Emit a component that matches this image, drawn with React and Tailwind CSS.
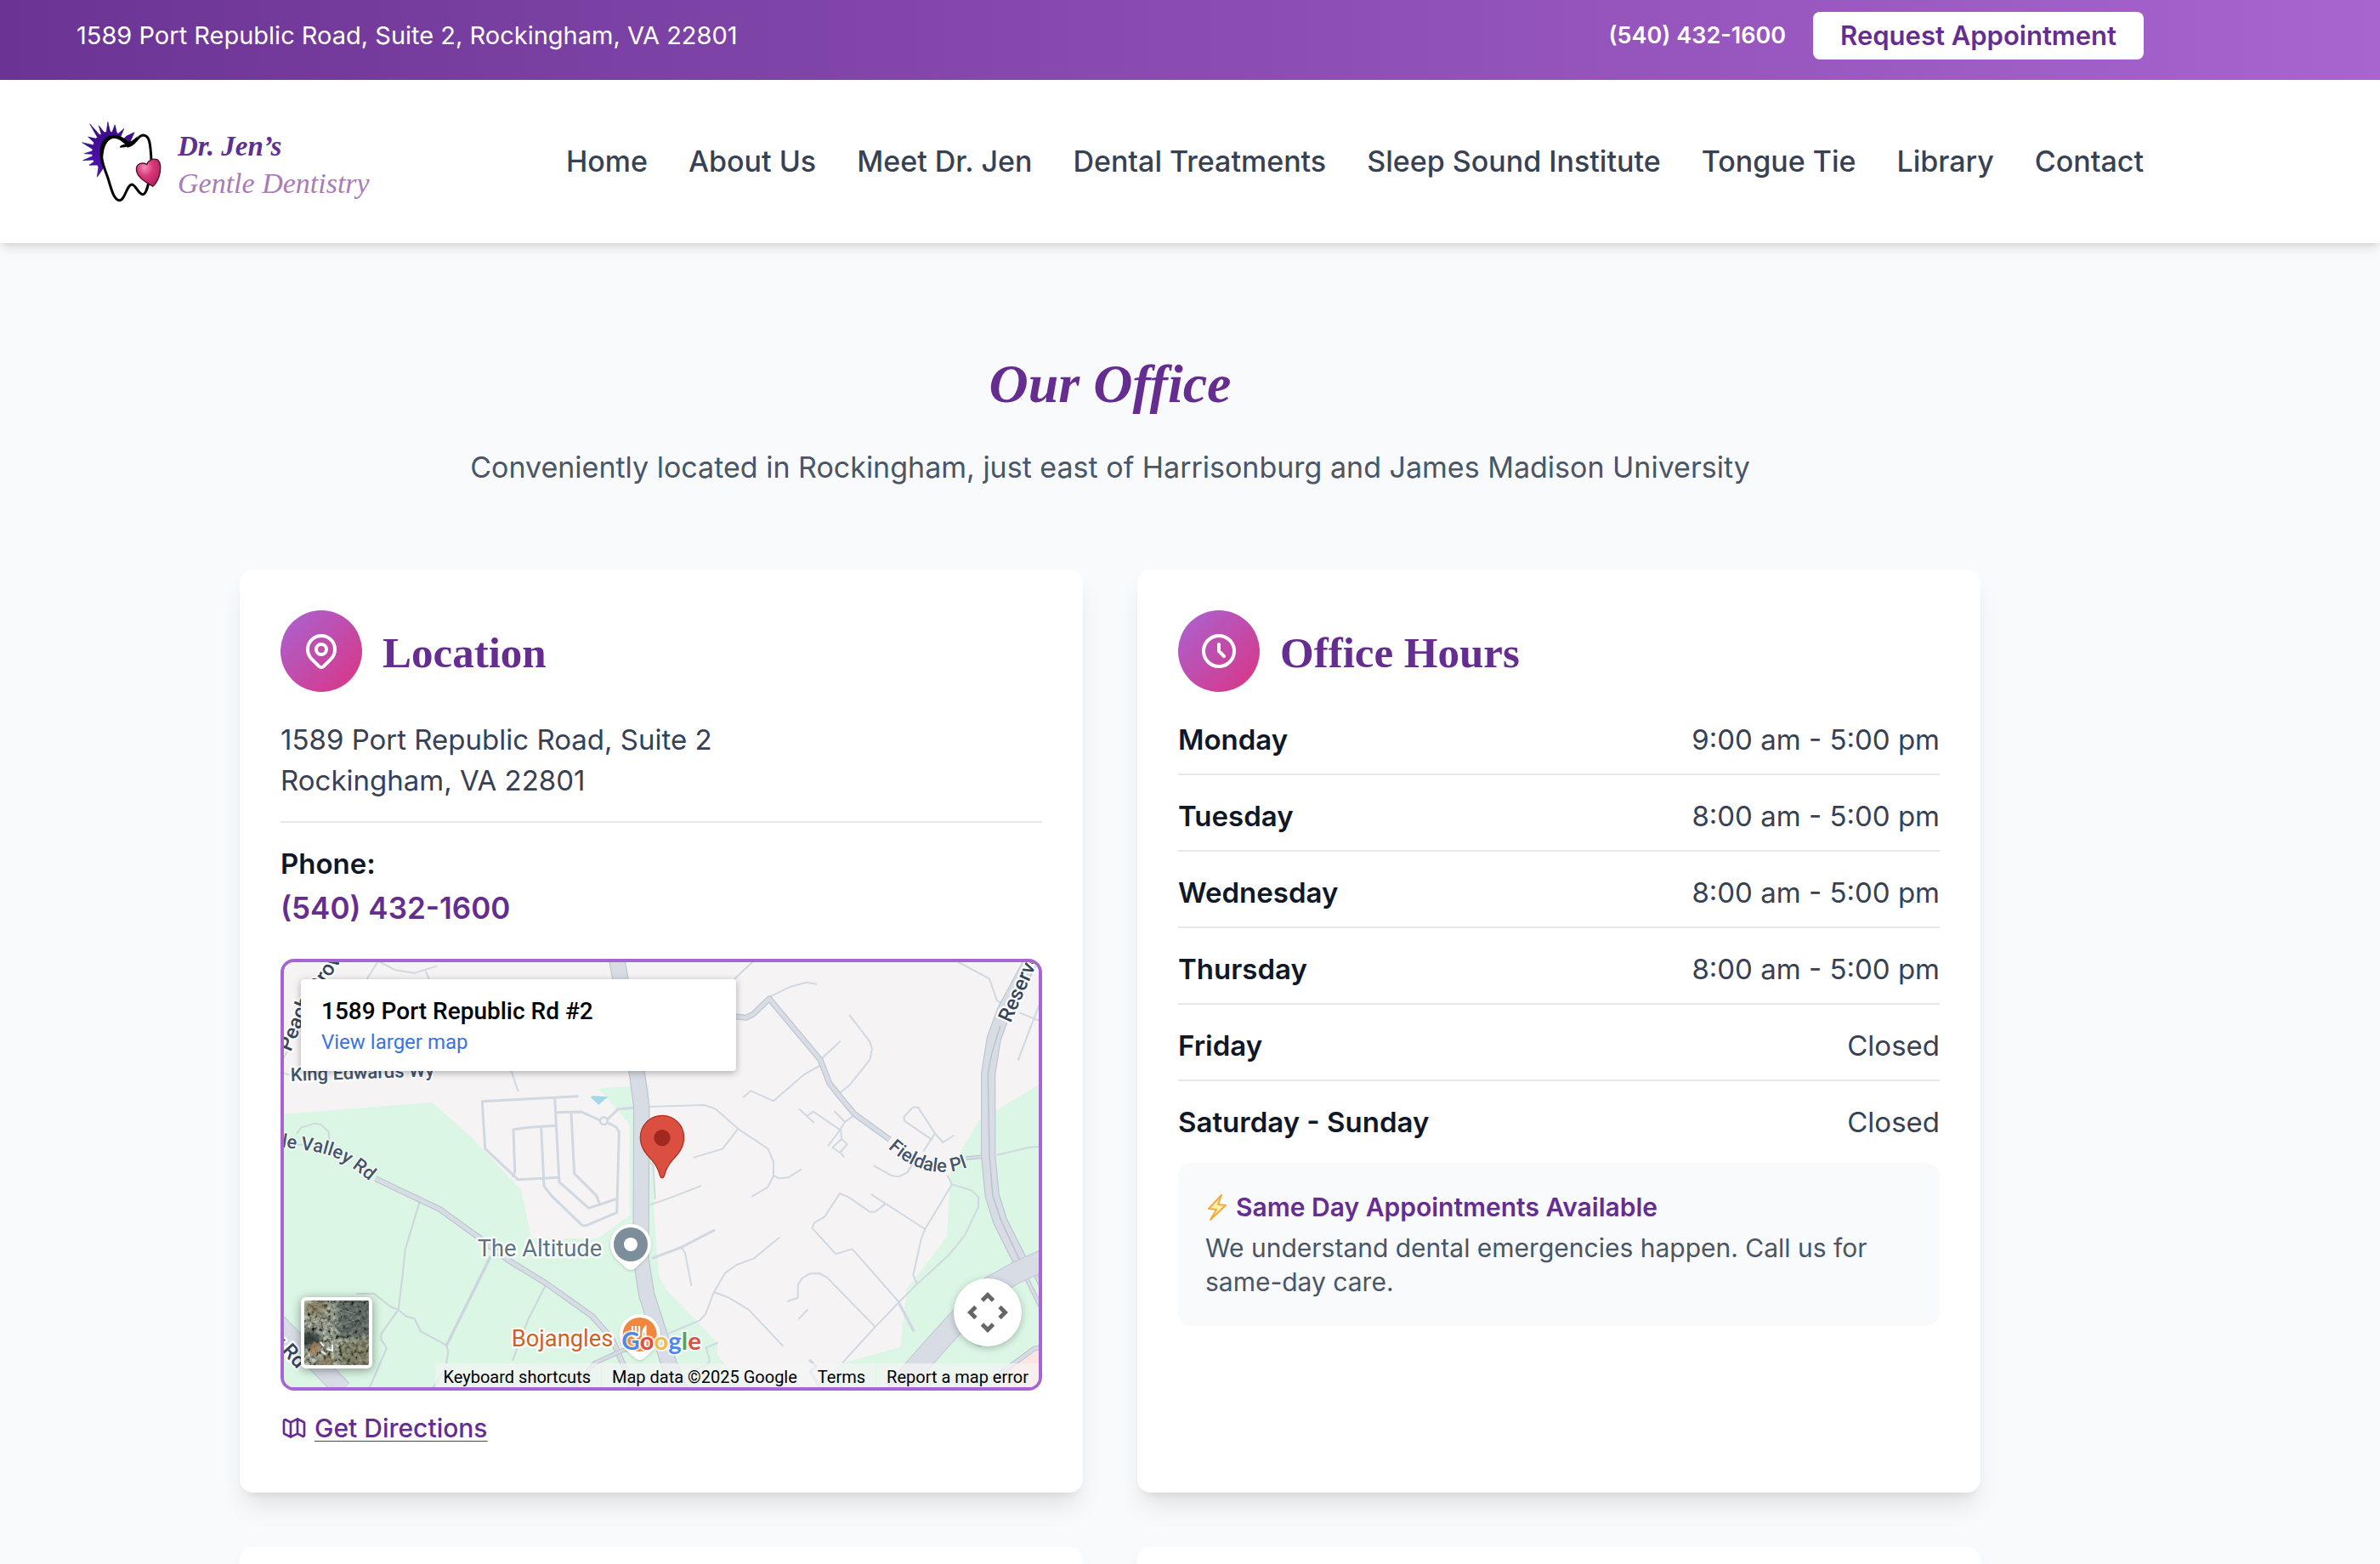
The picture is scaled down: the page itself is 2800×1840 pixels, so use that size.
import React from "react";

const NAV = [
  "Home",
  "About Us",
  "Meet Dr. Jen",
  "Dental Treatments",
  "Sleep Sound Institute",
  "Tongue Tie",
  "Library",
  "Contact",
];

const HOURS = [
  ["Monday", "9:00 am - 5:00 pm"],
  ["Tuesday", "8:00 am - 5:00 pm"],
  ["Wednesday", "8:00 am - 5:00 pm"],
  ["Thursday", "8:00 am - 5:00 pm"],
  ["Friday", "Closed"],
  ["Saturday - Sunday", "Closed"],
];

const CARD =
  "rounded-2xl bg-white p-12 shadow-[0_20px_30px_-6px_rgba(0,0,0,0.1),0_8px_12px_-8px_rgba(0,0,0,0.1)]";

function ToothLogo() {
  return (
    <svg viewBox="30 30 310 300" className="h-[100px] w-[103px] shrink-0" aria-hidden="true">
      <defs>
        <linearGradient id="burst" x1="0" y1="0" x2="0" y2="1">
          <stop offset="0" stopColor="#3a0a86" />
          <stop offset="1" stopColor="#5410b8" />
        </linearGradient>
        <radialGradient id="heart" cx="0.35" cy="0.3" r="0.75">
          <stop offset="0" stopColor="#f28fb5" />
          <stop offset="0.45" stopColor="#d9397a" />
          <stop offset="1" stopColor="#b3205c" />
        </radialGradient>
      </defs>
      <path
        d="M235 77 L207 90 L197 100 L185 95 L198 64 L177 82 L172 76 L166 50 L156 77 L149 74 L141 40 L136 76 L128 77 L109 53 L118 84 L112 86 L77 47 L104 94 L98 99 L71 93 L92 112 L90 122 L50 113 L87 136 L86 143 L58 152 L86 154 L87 161 L53 176 L90 174 L92 181 L75 193 L104 192 L108 200 L103 235 L122 208 L150 150 L220 110 Z"
        fill="url(#burst)"
        stroke="#2a1070"
        strokeWidth="2"
      />
      <path
        d="M212 113 C200 104 185 93 163 91 C138 90 122 108 118 138 C113 172 130 205 140 235 C152 270 160 316 182 318 C202 317 208 262 226 261 C240 262 248 296 265 297 C280 294 286 252 292 222 C298 195 295 165 292 135 C289 105 284 88 266 87 C246 88 240 120 212 126 Z"
        fill="#fff"
        stroke="#000"
        strokeWidth="9"
        strokeLinejoin="round"
      />
      <path
        d="M116 175 C110 140 120 92 162 86 C186 86 202 100 214 109 C224 112 236 100 246 90 C240 108 230 130 184 131 C182 125 190 121 202 119 C190 108 180 99 162 98 C134 102 124 138 124 176 Z"
        fill="#000"
      />
      <path
        d="M300 268 C278 254 240 236 242 204 C245 186 264 182 279 190 C284 177 299 167 315 173 C331 182 329 212 322 234 C316 250 308 262 300 268 Z"
        fill="url(#heart)"
        stroke="#4a1030"
        strokeWidth="4"
      />
    </svg>
  );
}

function OutlineIcon({ className, children }) {
  return (
    <svg
      viewBox="0 0 24 24"
      className={className}
      fill="none"
      stroke="currentColor"
      strokeWidth="2"
      strokeLinecap="round"
      strokeLinejoin="round"
      aria-hidden="true"
    >
      {children}
    </svg>
  );
}

function CardHeading({ title, children }) {
  return (
    <div className="mb-8 flex items-center gap-6">
      <span className="flex size-24 items-center justify-center rounded-full bg-[linear-gradient(135deg,#a864d3,#db3483)] text-white">
        <OutlineIcon className="size-12">{children}</OutlineIcon>
      </span>
      <h2 className="pt-1 font-['Liberation_Serif',serif] text-[51px] font-bold leading-[60px] text-[#662d91]">
        {title}
      </h2>
    </div>
  );
}

function MapLines({ d, w = 6, color = "#d0d8e1" }) {
  return <path d={d} fill="none" stroke={color} strokeWidth={w} strokeLinejoin="round" strokeLinecap="round" />;
}

function Road({ d, w, edge = "#bcc5cf", fill = "#d8dde5" }) {
  return (
    <g fill="none" strokeLinejoin="round">
      <path d={d} stroke={edge} strokeWidth={w + 4} />
      <path d={d} stroke={fill} strokeWidth={w - 3} />
    </g>
  );
}

function MapDrawing() {
  return (
    <svg
      viewBox="0 0 2664 1500"
      preserveAspectRatio="xMidYMid slice"
      className="absolute inset-0 size-full font-['Roboto',sans-serif]"
      aria-label="Map around 1589 Port Republic Rd"
      role="img"
    >
      <rect width="2664" height="1500" fill="#f5f3f4" />
      <g transform="translate(-42 -36)">
        <path
          d="M42 572 L565 530 L700 650 L880 840 L915 1010 L1150 1012 L1262 930 L1262 610 L1205 540 L1150 482 L1330 468 L1342 700 L1350 950 L1365 1140 L1390 1190 L1572 1380 L1572 1420 L1610 1470 L1720 1540 L42 1540 Z"
          fill="#dbf6e4"
        />
        <path
          d="M2706 468 L2555 560 L2490 600 L2395 770 L2382 1005 L2240 1190 L2218 1395 L2015 1450 L1900 1540 L2706 1540 Z"
          fill="#dbf6e4"
        />
        <path d="M2706 1400 L2600 1470 L2560 1540 L2706 1540 Z" fill="#fae5e2" />
        <path d="M1124 512 L1132 508 L1186 511 L1153 539 Z" fill="#9fd8ea" />
        <path d="M2470 1380 L2500 1395 L2520 1380 Z" fill="#9fd8ea" />

        <MapLines d="M335 95 L372 36 M382 36 L436 64 L504 74 L581 50 M542 68 L556 98 M42 372 L60 340 M845 422 L868 490 M42 428 L70 436" />
        <MapLines d="M88 640 L103 620 L150 605 L172 608 L200 635 L202 660 M82 680 L120 680" color="#cfdad9" />
        <MapLines
          w={9}
          d="M1078 509 L742 527 L752 694 L868 803 L1012 796 M998 515 L1014 812 L1118 904 L1220 870 M1002 566 L1092 564 L1158 594 M1183 592 L1222 554 L1280 550 M1184 602 L1215 618 L1225 636 L1217 920 L1110 965 L1095 965 L988 862 L960 826 L950 620 M1000 613 L910 619 L852 626 L857 778 L850 790 M1056 568 L1067 782 L1145 860 L1156 888"
        />
        <circle cx="1171" cy="596" r="13" fill="#f5f3f4" stroke="#d0d8e1" strokeWidth="8" />
        <MapLines
          color="#ccd5dc"
          d="M522 878 L470 1050 L460 1150 L446 1262 L385 1348 L385 1368 L405 1398 L345 1536 M300 1206 L360 1206 L418 1252 L446 1262 L474 1286 L502 1294 L526 1340 L616 1388 L622 1412 L612 1470 L570 1536 M968 1172 L905 1295 L850 1440 M1210 1412 L1080 1500"
        />
        <MapLines color="#ccd5dc" w={10} d="M770 1078 L616 1388" />
        <Road d="M365 800 L592 908 L720 1000 L830 1085 L968 1170 L1130 1285 L1200 1365 L1250 1480 L1270 1540" w={17} />
        <Road d="M1060 1540 L1140 1450 L1240 1405 L1330 1392" w={12} />
        <Road d="M20 1310 L250 1545" w={64} edge="#c3cad4" />

        <Road d="M1218 30 L1290 440 L1304 545 L1302 1080 L1322 1210 L1400 1450 L1440 1545" w={54} />
        <MapLines
          d="M1335 546 L1526 540 L1566 554 L1645 624 L1750 694 L1770 740 L1770 790 L1750 830 L1695 862 M1645 624 L1590 695 L1490 725 M1770 790 L1790 799 L1822 796 L1867 768 M1335 892 L1420 862 L1512 826 M1335 745 L1345 750 L1352 870 M1632 95 L1695 36"
        />
        <MapLines w={9} d="M1345 1080 L1445 1042 L1560 982" />
        <MapLines d="M1445 1042 L1458 1062 L1480 1176 M1560 1200 L1600 1132 L1640 1104 L1700 1082 L1790 1008 M1390 1350 L1510 1300 L1530 1278 L1560 1200 L1612 1220 L1682 1262 L1803 1390 M1820 1233 L1856 1220 L1856 1176 L1870 1152 L1898 1135 L1932 1134 L1958 1148 L2128 1322 M1860 1294 L1890 1263 M1572 1380 L1532 1396 L1545 1440 L1540 1452 L1460 1490" />
        <MapLines d="M2015 1448 L2128 1324 L2213 1236 L2270 1178 L2388 1070 L2445 1000 L2493 900 L2493 865 L2470 842 L2400 820 L2385 790 M2400 820 L2305 978 L2292 1010 L2263 1140 L2276 1172 M2213 1236 L2048 1048 L1990 1066 L1906 974 L1915 955 L1950 935 L2004 852 L2040 868 L2110 917 L2128 917 L2164 890 M2116 856 L2305 978" />
        <MapLines w={10} d="M2213 1240 L2264 1336 M1900 1442 L1920 1464 L1900 1480 L1930 1530" />
        <MapLines d="M1754 160 L1830 122 L1888 107 L1921 113 M2039 224 L2110 316 L2118 342 L2110 380 L2040 468 L2004 498 M1938 378 L2005 316 M1935 400 L1876 434 L1770 526 L1690 490 L1664 512 M2056 575 L2020 602 L2005 628 L1964 682 M1986 563 L2022 600 M2005 628 L1910 563 L1890 578 M1862 555 L1911 601 M2008 630 L2010 660 L2030 678 L2005 708 L1978 690 L2010 660 M2005 708 L2018 722" />
        <MapLines d="M2328 662 L2232 596 L2230 582 L2262 548 L2280 548 L2340 640 L2300 702 M2340 640 L2368 672 L2405 648 M2125 755 L2188 790 L2212 793 L2242 778 L2270 735" />
        <MapLines d="M2423 36 L2532 94 L2558 170 L2580 186 M2634 380 L2706 190 M2640 215 L2706 242 M2460 728 L2510 722 M2560 716 L2670 690 L2706 687" />
        <Road d="M1638 228 L1672 232 L1698 220 L1755 165 L1935 380 L1968 464 L2004 510 L2056 572 L2180 662" w={17} />
        <Road d="M2450 728 L2530 720" w={10} />
        <Road d="M2690 1130 L2770 1290" w={12} />
        <Road d="M2662 1150 L2742 1310" w={12} />
        <Road d="M2680 30 L2585 205 L2548 305 L2528 430 L2528 720 L2542 860 L2570 950 L2650 1110" w={48} />
        <MapLines w={5} color="#bcc5cf" d="M2570 262 L2540 360 L2527 430 L2532 720 L2544 860 L2574 950 L2640 1090" />
        <Road d="M2730 1085 L2630 1130 L2540 1180 L2450 1270 L2340 1390 L2200 1550" w={74} edge="#c3cad4" />
        <path d="M2626 1096 L2660 1076 L2680 1120 L2640 1130 Z" fill="#d8dde5" />
        <Road d="M2540 1510 L2690 1400 L2730 1392" w={14} />

        <defs>
          <path id="valley" d="M-4 682 L85 696 Q200 706 255 742 Q305 775 352 816 L400 860" />
          <path id="fieldale" d="M2174 692 Q2330 834 2500 738" />
        </defs>
        <g fontSize="66" fontWeight="500" fill="#44546a" stroke="#fff" strokeWidth="14" paintOrder="stroke" strokeLinejoin="round">
          <text transform="translate(66 456) rotate(-2)">King Edwards Wy</text>
          <text strokeWidth="7">
            <textPath href="#valley">ple Valley Rd</textPath>
          </text>
          <text strokeWidth="7">
            <textPath href="#fieldale">Fieldale Pl</textPath>
          </text>
          <g fill="#36455a" fontSize="72">
            <text transform="translate(66 354) rotate(-68)">Peach</text>
            <text transform="translate(162 152) rotate(-56)">Grove</text>
            <text transform="translate(2606 252) rotate(-66)">Reservoir St</text>
            <text transform="translate(-4 1370) rotate(48)">y Rd</text>
          </g>
        </g>
        <g fontSize="82" stroke="#fff" strokeWidth="14" paintOrder="stroke" strokeLinejoin="round">
          <text x="725" y="1073" fill="#5d7482">The Altitude</text>
          <text x="845" y="1391" fill="#cb6324">Bojangles</text>
        </g>

        <g className="drop-shadow-lg">
          <path d="M1266 960 A72 72 0 0 1 1318 1082 L1282 1116 Q1266 1128 1250 1116 L1214 1082 A72 72 0 0 1 1266 960 Z" fill="#fff" />
          <path d="M1298 1278 A72 72 0 0 1 1350 1400 L1314 1434 Q1298 1446 1282 1434 L1246 1400 A72 72 0 0 1 1298 1278 Z" fill="#fff" />
        </g>
        <circle cx="1266" cy="1032" r="60" fill="#7b8e9a" />
        <circle cx="1266" cy="1032" r="24" fill="#fff" />
        <circle cx="1298" cy="1350" r="60" fill="#f0873c" />
        <path
          d="M1272 1320 V1345 Q1272 1360 1284 1360 V1392 M1284 1320 V1360 M1296 1320 V1345 Q1296 1360 1284 1360 M1318 1392 V1324 Q1308 1334 1308 1358 H1318"
          fill="none"
          stroke="#fff"
          strokeWidth="7"
        />

        <path
          d="M1377 577 C1420 577 1454 612 1454 655 C1454 690 1434 712 1414 734 C1396 754 1390 768 1385 788 Q1382 797 1377 797 Q1372 797 1369 788 C1364 768 1358 754 1340 734 C1320 712 1300 690 1300 655 C1300 612 1334 577 1377 577 Z"
          fill="#db4f40"
          stroke="#b03226"
          strokeWidth="4"
        />
        <circle cx="1377" cy="656" r="29" fill="#a0281f" />

        <text
          x="1234"
          y="1403"
          fontSize="88"
          fontWeight="700"
          className="font-['Lato',sans-serif]"
          stroke="#fff"
          strokeOpacity="0.75"
          strokeWidth="12"
          paintOrder="stroke"
        >
          <tspan fill="#4f86ec">G</tspan>
          <tspan fill="#dc5044">o</tspan>
          <tspan fill="#f2bd3a">o</tspan>
          <tspan fill="#4f86ec">g</tspan>
          <tspan fill="#57a55c">l</tspan>
          <tspan fill="#dc5044">e</tspan>
        </text>
      </g>
    </svg>
  );
}

function SatelliteThumb() {
  return (
    <svg viewBox="0 0 76 76" className="size-full" aria-hidden="true">
      <defs>
        <filter id="ground" x="0" y="0" width="100%" height="100%">
          <feTurbulence type="fractalNoise" baseFrequency="0.22" numOctaves="4" seed="8" />
          <feColorMatrix values="0.8 0.5 0 0 -0.38  0.8 0.5 0 0 -0.36  0.7 0.5 0 0 -0.37  0 0 0 0 1" />
        </filter>
        <filter id="soften" x="-20%" y="-20%" width="140%" height="140%">
          <feGaussianBlur stdDeviation="3" />
        </filter>
      </defs>
      <rect width="76" height="76" filter="url(#ground)" />
      <g filter="url(#soften)">
        <path d="M4 2 H26 V12 L12 20 L4 16 Z" fill="#7a6342" opacity="0.5" />
        <path d="M38 -4 H80 V42 L40 44 Z" fill="#2b383c" opacity="0.5" />
        <path d="M-4 36 L18 38 L16 54 L-4 54 Z" fill="#1a2426" opacity="0.8" />
        <path d="M42 52 L76 44 V80 H42 Z" fill="#5c5836" opacity="0.45" />
        <path d="M14 80 Q18 62 34 64 V80 Z" fill="#7c6a48" opacity="0.6" />
      </g>
      <path d="M11 48 L19 52 L14 65 L5 61 Z" fill="#a87b56" opacity="0.75" />
      <path d="M30 0 L34 26 L35 60 L42 76" fill="none" stroke="#8d948f" strokeWidth="2" opacity="0.8" />
      <g fill="none" stroke="#8b9593" strokeWidth="1" opacity="0.7">
        <path d="M10 28 L32 28 M12 28 V40 M16 28 V40 M20 28 V41 M24 28 V41 M28 28 V42 M12 14 Q24 10 30 22 M36 8 L60 16 M38 30 L62 22" />
      </g>
      <path d="M19 49 L23 54 M20 60 L25 63 M33 52 V59 L27 57" fill="none" stroke="#f2f2ee" strokeWidth="2" />
    </svg>
  );
}

function OfficeMap() {
  return (
    <div className="relative mt-8 h-[508px] overflow-hidden rounded-2xl border-4 border-[#a864d3]">
      <MapDrawing />
      <div className="absolute left-5 top-5 w-[512px] rounded-sm bg-white px-6 pb-4 pt-5 font-['Roboto',sans-serif] leading-9 shadow-[0_2px_8px_rgba(0,0,0,0.3)]">
        <p className="text-[28px] font-medium text-black">1589 Port Republic Rd #2</p>
        <a href="#map" className="block text-2xl leading-9 text-[#3b73e0]">
          View larger map
        </a>
      </div>
      <button
        type="button"
        aria-label="Show satellite imagery"
        className="absolute bottom-[22px] left-5 size-[84px] overflow-hidden rounded-md border-4 border-white bg-white shadow-[0_2px_12px_rgba(0,0,0,0.4)]"
      >
        <SatelliteThumb />
      </button>
      <button
        type="button"
        aria-label="Map camera controls"
        className="absolute bottom-12 right-5 flex size-20 items-center justify-center rounded-full bg-white shadow-[0_2px_8px_rgba(0,0,0,0.25)]"
      >
        <svg viewBox="0 0 140 140" className="size-12" fill="none" stroke="#666" strokeWidth="14" aria-hidden="true">
          <path d="M51 29 L70 10 L89 29 M51 111 L70 130 L89 111 M29 51 L10 70 L29 89 M111 51 L130 70 L111 89" />
        </svg>
      </button>
      <div className="absolute bottom-0 right-0 flex h-7 items-center font-['Roboto',sans-serif] text-xl leading-8 text-black">
        <button type="button" className="h-7 bg-[#f5f5f5]/70 pl-2.5 pr-3">
          Keyboard shortcuts
        </button>
        <span className="ml-px h-7 bg-[#f5f5f5]/70 px-3">Map data ©2025 Google</span>
        <a href="#terms" className="h-7 bg-[#f5f5f5]/70 px-3">
          Terms
        </a>
        <a href="#report" className="ml-px h-7 bg-[#f5f5f5]/70 px-3">
          Report a map error
        </a>
      </div>
    </div>
  );
}

function LocationCard() {
  return (
    <section className={CARD}>
      <CardHeading title="Location">
        <path d="M17.657 16.657L13.414 20.9a1.998 1.998 0 01-2.827 0l-4.244-4.243a8 8 0 1111.314 0z" />
        <path d="M15 11a3 3 0 11-6 0 3 3 0 016 0z" />
      </CardHeading>
      <address className="mb-6 border-b-2 border-gray-200 pb-6 text-[33px] leading-[48px] not-italic text-gray-700">
        1589 Port Republic Road, Suite 2<br />
        Rockingham, VA 22801
      </address>
      <p className="text-[33px] font-semibold leading-[48px] text-gray-900">Phone:</p>
      <a href="tel:5404321600" className="block text-[35px] font-semibold leading-[56px] text-[#662d91]">
        (540) 432-1600
      </a>
      <OfficeMap />
      <a
        href="#directions"
        className="mb-2 mt-6 flex h-10 w-fit items-center gap-2 text-[30px] font-medium leading-10 text-[#662d91]"
      >
        <OutlineIcon className="size-8">
          <path d="M9 20l-5.447-2.724A1 1 0 013 16.382V5.618a1 1 0 011.447-.894L9 7m0 13l6-3m-6 3V7m6 10l4.553 2.276A1 1 0 0021 18.382V7.618a1 1 0 00-.553-.894L15 4m0 13V4m0 0L9 7" />
        </OutlineIcon>
        <span className="underline decoration-1 underline-offset-4">Get Directions</span>
      </a>
    </section>
  );
}

function HoursCard() {
  return (
    <section className={CARD}>
      <CardHeading title="Office Hours">
        <path d="M12 8v4l3 3m6-3a9 9 0 11-18 0 9 9 0 0118 0z" />
      </CardHeading>
      <table className="w-full border-collapse text-[33px] leading-[48px]">
        <tbody>
          {HOURS.map(([day, time]) => (
            <tr key={day} className="group border-b-2 border-gray-200 last:border-b-0">
              <th
                scope="row"
                className="pb-4 pt-6 text-left font-semibold text-gray-900 group-first:pt-0 group-last:pb-0"
              >
                {day}
              </th>
              <td className="pb-4 pt-6 text-right text-gray-700 group-first:pt-0 group-last:pb-0">{time}</td>
            </tr>
          ))}
        </tbody>
      </table>
      <div className="mt-6 rounded-2xl bg-[#f8fafc] p-8 text-[30px] leading-10">
        <p className="mb-2 flex items-center gap-2 font-semibold text-[#662d91]">
          <svg viewBox="0 0 28 36" className="h-9 w-7" aria-hidden="true">
            <path
              d="M19 4 L4 20 L13 21 L6 33 L24 16 L15 15 Z"
              fill="#fdf0b0"
              stroke="#f0ac3c"
              strokeWidth="2"
              strokeLinejoin="round"
            />
          </svg>
          Same Day Appointments Available
        </p>
        <p className="text-gray-600">We understand dental emergencies happen. Call us for same-day care.</p>
      </div>
    </section>
  );
}

export default function App() {
  return (
    <div className="h-screen overflow-hidden bg-[#f8fafc] font-['Inter',sans-serif]">
      <div className="bg-[linear-gradient(90deg,#6b3494,#a864cf)]">
        <div className="flex max-w-[2612px] items-center justify-between px-[90px] pb-6 pt-3.5 text-white">
          <p className="text-[29px] leading-10">1589 Port Republic Road, Suite 2, Rockingham, VA 22801</p>
          <div className="flex items-center gap-8">
            <a href="tel:5404321600" className="text-[27px] font-semibold leading-10">
              (540) 432-1600
            </a>
            <button
              type="button"
              className="h-14 rounded-lg bg-white px-8 text-[31px] font-semibold leading-10 text-[#662d91]"
            >
              Request Appointment
            </button>
          </div>
        </div>
      </div>

      <header className="relative bg-white shadow-[0_8px_12px_-2px_rgba(0,0,0,0.1),0_4px_8px_-4px_rgba(0,0,0,0.1)]">
        <div className="flex h-48 max-w-[2612px] items-center justify-between px-[90px]">
          <a href="#home" className="flex items-center gap-4 font-['Liberation_Serif',serif] text-[34px] italic leading-[43px]">
            <ToothLogo />
            <span className="flex flex-col pt-2">
              <span className="text-[33px] font-bold text-[#5c3094]">Dr. Jen’s</span>
              <span className="text-[#a97bb9]">Gentle Dentistry</span>
            </span>
          </a>
          <nav className="flex gap-12 text-[34px] font-medium leading-[48px] text-gray-700">
            {NAV.map((label) => (
              <a key={label} href={"#" + label.toLowerCase().replace(/[^a-z]+/g, "-")}>
                {label}
              </a>
            ))}
          </nav>
        </div>
      </header>

      <main className="max-w-[2612px] px-[90px] pt-24">
        <div className="mb-[92px] flex flex-col items-center text-center">
          <h1 className="font-['Liberation_Serif',serif] text-[64px] font-bold italic leading-[140px] text-[#662d91]">
            Our Office
          </h1>
          <p className="text-[34px] leading-[56px] text-gray-600">
            Conveniently located in Rockingham, just east of Harrisonburg and James Madison University
          </p>
        </div>
        <div className="mx-auto grid max-w-[2048px] grid-cols-2 gap-16">
          <LocationCard />
          <HoursCard />
          <section className={CARD} />
          <section className={CARD} />
        </div>
      </main>
    </div>
  );
}
